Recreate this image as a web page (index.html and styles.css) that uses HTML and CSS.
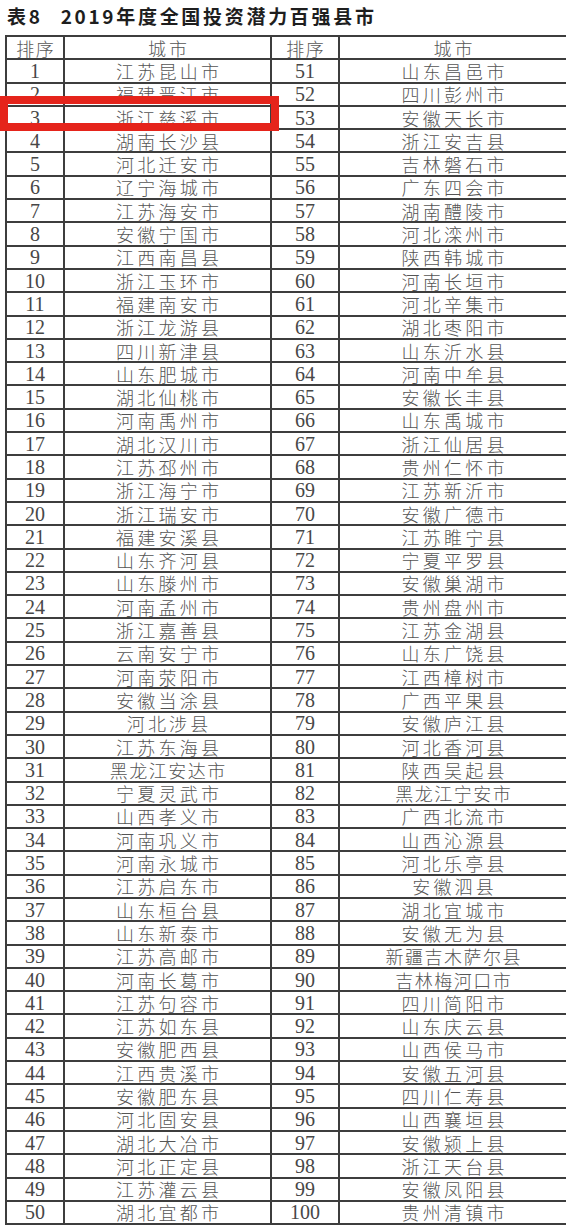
FILE: index.html
```html
<!DOCTYPE html>
<html lang="zh-CN">
<head>
<meta charset="utf-8">
<title>表8 2019年度全国投资潜力百强县市</title>
<link rel="stylesheet" href="styles.css">
</head>
<body>
<div class="page">
  <h1 class="title"><span class="tno">表8</span>2019年度全国投资潜力百强县市</h1>
  <table class="rank">
    <colgroup><col class="c1"><col class="c2"><col class="c3"><col class="c4"></colgroup>
    <tbody id="tb">
      <tr class="head"><td class="num hd">排序</td><td class="city">城市</td><td class="num hd">排序</td><td class="city">城市</td></tr>
    </tbody>
  </table>
  <div class="mark"></div>
</div>
<script>
var L=["江苏昆山市","福建晋江市","浙江慈溪市","湖南长沙县","河北迁安市","辽宁海城市","江苏海安市","安徽宁国市","江西南昌县","浙江玉环市","福建南安市","浙江龙游县","四川新津县","山东肥城市","湖北仙桃市","河南禹州市","湖北汉川市","江苏邳州市","浙江海宁市","浙江瑞安市","福建安溪县","山东齐河县","山东滕州市","河南孟州市","浙江嘉善县","云南安宁市","河南荥阳市","安徽当涂县","河北涉县","江苏东海县","黑龙江安达市","宁夏灵武市","山西孝义市","河南巩义市","河南永城市","江苏启东市","山东桓台县","山东新泰市","江苏高邮市","河南长葛市","江苏句容市","江苏如东县","安徽肥西县","江西贵溪市","安徽肥东县","河北固安县","湖北大冶市","河北正定县","江苏灌云县","湖北宜都市"];
var R=["山东昌邑市","四川彭州市","安徽天长市","浙江安吉县","吉林磐石市","广东四会市","湖南醴陵市","河北滦州市","陕西韩城市","河南长垣市","河北辛集市","湖北枣阳市","山东沂水县","河南中牟县","安徽长丰县","山东禹城市","浙江仙居县","贵州仁怀市","江苏新沂市","安徽广德市","江苏睢宁县","宁夏平罗县","安徽巢湖市","贵州盘州市","江苏金湖县","山东广饶县","江西樟树市","广西平果县","安徽庐江县","河北香河县","陕西吴起县","黑龙江宁安市","广西北流市","山西沁源县","河北乐亭县","安徽泗县","湖北宜城市","安徽无为县","新疆吉木萨尔县","吉林梅河口市","四川简阳市","山东庆云县","山西侯马市","安徽五河县","四川仁寿县","山西襄垣县","安徽颍上县","浙江天台县","安徽凤阳县","贵州清镇市"];
var tb=document.getElementById("tb");
function cityCell(n){var td=document.createElement("td");td.className="city"+(n.length>5?" long":"");td.textContent=n;return td;}
function numCell(n){var td=document.createElement("td");td.className="num";td.textContent=n;return td;}
for(var i=0;i<50;i++){
  var tr=document.createElement("tr");
  tr.appendChild(numCell(i+1));tr.appendChild(cityCell(L[i]));
  tr.appendChild(numCell(i+51));tr.appendChild(cityCell(R[i]));
  tb.appendChild(tr);
}
</script>
</body>
</html>
```
FILE: styles.css
```css
html, body {
  margin: 0;
  padding: 0;
  background: #ffffff;
}
.page {
  position: relative;
  width: 566px;
  height: 1230px;
  padding-left: 5px;
  box-sizing: border-box;
}
.title {
  margin: 0;
  height: 35px;
  line-height: 32px;
  padding-left: 2px;
  font-family: "Noto Sans CJK SC", sans-serif;
  font-weight: 700;
  font-size: 19px;
  letter-spacing: 2.7px;
  color: #1e1e1e;
  white-space: nowrap;
}
.tno {
  margin-right: 18px;
}
.rank {
  border-collapse: collapse;
  table-layout: fixed;
  width: 561px;
}
.c1 { width: 58px; }
.c2 { width: 207px; }
.c3 { width: 68px; }
.c4 { width: 228px; }
.rank td {
  border: 2px solid #3d3d3d;
  height: 21.3px;
  padding: 0;
  text-align: center;
  vertical-align: middle;
  white-space: nowrap;
  overflow: hidden;
}
.rank td.num {
  font-family: "Liberation Serif", "Noto Sans CJK SC", serif;
  font-size: 20px;
  line-height: 20px;
  color: #474747;
}
.rank td.hd {
  font-family: "Noto Sans CJK SC", sans-serif;
  font-weight: 300;
  font-size: 18px;
  letter-spacing: 1.5px;
  text-indent: 1.5px;
  color: #5a5a5a;
}
.rank td.city {
  font-family: "Noto Sans CJK SC", sans-serif;
  font-weight: 300;
  font-size: 18px;
  line-height: 20px;
  letter-spacing: 3.2px;
  text-indent: 3.2px;
  color: #555555;
}
.rank td.city.long {
  letter-spacing: 1.5px;
  text-indent: 1.5px;
}
.mark {
  position: absolute;
  left: 0;
  top: 96px;
  width: 279px;
  height: 35px;
  box-sizing: border-box;
  border: 8px solid #e5241b;
}
```
